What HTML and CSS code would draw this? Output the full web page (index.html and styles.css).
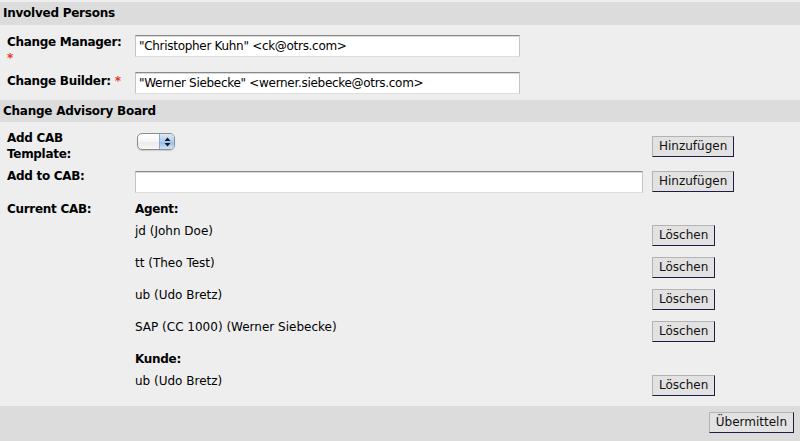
FILE: index.html
```html
<!DOCTYPE html>
<html>
<head>
<meta charset="utf-8">
<title>Change</title>
<link rel="stylesheet" href="styles.css">
</head>
<body>
<div class="head head-1">Involved Persons</div>
<div class="row row-mgr">
  <div class="label">Change Manager: <span class="req">*</span></div>
  <input class="text text-short" type="text" value="&quot;Christopher Kuhn&quot; &lt;ck@otrs.com&gt;">
</div>
<div class="row row-bld">
  <div class="label">Change Builder: <span class="req">*</span></div>
  <input class="text text-short" type="text" value="&quot;Werner Siebecke&quot; &lt;werner.siebecke@otrs.com&gt;">
</div>

<div class="head head-2">Change Advisory Board</div>
<div class="row3 row-tpl">
  <div class="label">Add CAB<br>Template:</div>
  <div class="popup"><span class="popup-arrows"><svg width="7" height="10" viewBox="0 0 7 10"><path d="M3.5 0.5 L6.5 4 L0.5 4 Z M0.5 6 L6.5 6 L3.5 9.5 Z" fill="#1b1b1b"/></svg></span></div>
  <button class="btn">Hinzufügen</button>
</div>
<div class="row3 row-add">
  <div class="label">Add to CAB:</div>
  <input class="text text-wide" type="text" value="">
  <button class="btn">Hinzufügen</button>
</div>
<div class="row3 row-cur">
  <div class="label">Current CAB:</div>
  <div class="sub">Agent:</div>
</div>
<div class="row3 item">
  <div></div>
  <div>jd (John Doe)</div>
  <button class="btn">Löschen</button>
</div>
<div class="row3 item">
  <div></div>
  <div>tt (Theo Test)</div>
  <button class="btn">Löschen</button>
</div>
<div class="row3 item">
  <div></div>
  <div>ub (Udo Bretz)</div>
  <button class="btn">Löschen</button>
</div>
<div class="row3 item">
  <div></div>
  <div>SAP (CC 1000) (Werner Siebecke)</div>
  <button class="btn">Löschen</button>
</div>
<div class="row3 row-kunde">
  <div></div>
  <div class="sub">Kunde:</div>
</div>
<div class="row3 item item-last">
  <div></div>
  <div>ub (Udo Bretz)</div>
  <button class="btn">Löschen</button>
</div>

<div class="footer">
  <button class="btn">Übermitteln</button>
</div>
</body>
</html>
```

FILE: styles.css
```css
html, body {
  margin: 0;
  padding: 0;
}
body {
  background: #eeeeee;
  font-family: "DejaVu Sans", sans-serif;
  font-size: 12px;
  line-height: 16px;
  color: #000;
  height: 441px;
  overflow: hidden;
}
.head {
  background: #dcdcdc;
  font-weight: bold;
  letter-spacing: -0.25px;
  padding-left: 3px;
}
.head-1 {
  margin-top: 2px;
  height: 23px;
  line-height: 23px;
}
.head-2 {
  height: 22px;
  line-height: 22px;
}
.row {
  display: grid;
  grid-template-columns: 128px auto;
  align-items: start;
  padding-left: 7px;
}
.row3 {
  display: grid;
  grid-template-columns: 128px 517px auto;
  align-items: start;
  justify-items: start;
  padding-left: 7px;
}
.label {
  font-weight: bold;
  letter-spacing: -0.3px;
  width: 120px;
}
.req {
  color: #e2352b;
  font-weight: bold;
}
.sub {
  font-weight: bold;
  letter-spacing: -0.3px;
}
.text {
  box-sizing: border-box;
  height: 22px;
  margin: 0;
  padding: 0 3px;
  border: 1px solid #c4c4c4;
  border-top-color: #8a8a8a;
  border-bottom-color: #dedede;
  box-shadow: inset 0 1px 0 #d8d8d8;
  background: #fff;
  font-family: "DejaVu Sans", sans-serif;
  font-size: 12px;
  letter-spacing: -0.3px;
  color: #000;
  outline: none;
}
.text-short { width: 385px; }
.text-wide { width: 508px; }

.row-mgr { padding-top: 9px; }
.row-mgr .text { margin-top: 1px; }
.row-bld { padding-bottom: 6px; }
.row-bld .label { margin-top: 7px; }
.row-bld .text { margin-top: 6px; }

.row-tpl { padding-top: 8px; padding-bottom: 6px; }
.row-tpl .popup { margin-top: 3px; margin-left: 2px; }
.row-tpl .btn { margin-top: 6px; }
.row-add { padding-bottom: 8px; }
.row-add .text { margin-top: 3px; }
.row-add .btn { margin-top: 3px; }
.row-cur { padding-bottom: 6px; }
.item { padding-bottom: 9px; }
.item .btn { margin-top: 2px; }
.row-kunde { padding-bottom: 6px; }
.item-last { padding-bottom: 10px; }

.popup {
  box-sizing: border-box;
  width: 38px;
  height: 17px;
  border: 1px solid #8d8d8d;
  border-radius: 5px;
  background: linear-gradient(#ffffff, #f6f6f6 50%, #e9e9e9 51%, #f7f7f7);
  display: flex;
  justify-content: flex-end;
  overflow: hidden;
  box-shadow: 0 1px 1px rgba(0,0,0,0.15);
}
.popup-arrows {
  width: 14px;
  border-left: 1px solid #8ea8cf;
  background: linear-gradient(#dce9fa, #b0ccf1 50%, #93b9ec 51%, #cfe2fa);
  display: flex;
  align-items: center;
  justify-content: center;
}
.popup-arrows svg { display: block; }

.btn {
  box-sizing: border-box;
  height: 21px;
  margin: 0;
  padding: 0 6px;
  background: #e2e2e2;
  border: 1px solid;
  border-color: #b3b3b3 #201c48 #201c48 #b3b3b3;
  border-radius: 0;
  font-family: "DejaVu Sans", sans-serif;
  font-size: 12px;
  line-height: 19px;
  color: #111;
}

.footer {
  background: #dcdcdc;
  height: 35px;
  display: flex;
  justify-content: flex-end;
  align-items: flex-start;
  padding-right: 6px;
}
.footer .btn { margin-top: 6px; }
```
